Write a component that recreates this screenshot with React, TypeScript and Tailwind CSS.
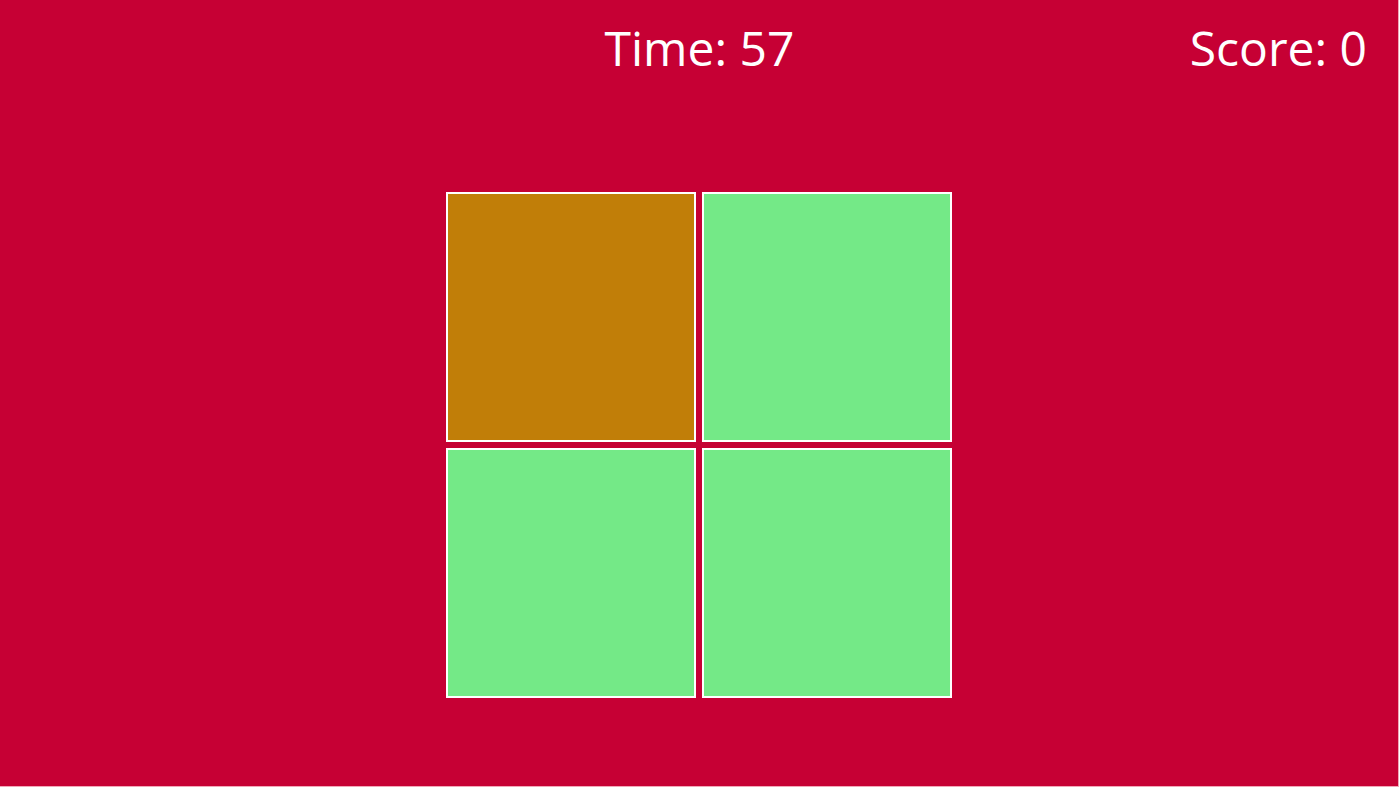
export default function App() {
  const tiles = ["bg-[#c17e08]", "bg-[#74e987]", "bg-[#74e987]", "bg-[#74e987]"];

  return (
    <div
      className="h-screen w-full bg-[#c60034] flex flex-col text-white border-r border-b border-[#f2a7b8]"
      style={{ fontFamily: '"Open Sans", "Noto Sans", sans-serif' }}
    >
      {/* Header */}
      <div className="h-[103px] grid grid-cols-3 items-start pt-[19px] pl-8 pr-[31px]">
        <div />
        <div className="text-center text-[48px] leading-[58px]">Time: 57</div>
        <div className="text-right text-[48px] leading-[58px]">Score: 0</div>
      </div>

      {/* Board */}
      <div className="flex-1 flex items-center justify-center">
        <div className="grid grid-cols-2 gap-[6px]">
          {tiles.map((c, i) => (
            <div key={i} className={`w-[250px] h-[250px] border-2 border-white ${c}`} />
          ))}
        </div>
      </div>
    </div>
  );
}
